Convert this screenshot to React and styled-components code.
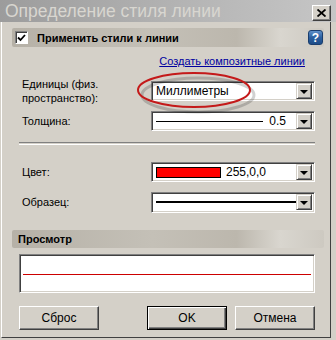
import React from 'react'
import styled, { createGlobalStyle } from 'styled-components'

const GlobalStyle = createGlobalStyle`
    html, body {
        margin: 0;
        padding: 0;
        background: #d4d0c8;
    }
    body {
        font-family: "Liberation Sans", Arial, sans-serif;
        font-size: 11px;
        color: #000;
    }
`

const Window = styled.div`
    position: relative;
    width: 336px;
    height: 340px;
    background: #d4d0c8;
    display: flex;
    flex-direction: column;
    overflow: hidden;
`

const TitleBar = styled.div`
    height: 22px;
    flex: none;
    display: flex;
    align-items: center;
    justify-content: space-between;
    padding: 0 5px 0 5px;
    background: linear-gradient(90deg, #9c9c9c 0%, #b4b4b4 55%, #c6c6c6 100%);
`

const Title = styled.span`
    font-size: 17.5px;
    color: #d8d6d0;
    margin-top: 1px;
`

const CloseButton = styled.div`
    width: 19px;
    height: 16px;
    box-sizing: border-box;
    margin-top: 4px;
    background: #d4d0c8;
    border-top: 1px solid #fff;
    border-left: 1px solid #fff;
    border-right: 1px solid #404040;
    border-bottom: 1px solid #404040;
    box-shadow: inset -1px -1px 0 #808080;
    display: flex;
    align-items: center;
    justify-content: center;
`

const Body = styled.div`
    flex: 1;
    margin: 0 5px 2px 1px;
    border-left: 1px solid #fff;
    border-right: 1px solid #404040;
    border-bottom: 1px solid #404040;
    padding: 6px 6px 0 10px;
    display: flex;
    flex-direction: column;
`

const GroupBar = styled.div`
    height: ${p => p.$h}px;
    display: flex;
    align-items: center;
    padding: 0 1px 0 ${p => p.$pl}px;
    margin-top: ${p => p.$mt || 0}px;
    border-radius: 2px;
    background: linear-gradient(90deg, #b6b1a7 0%, #c4c0b7 45%, #bcb7ad 72%, #d9d6cf 86%, #cdc9c1 100%);
    font-weight: bold;
    font-size: 11px;
`

const Checkbox = styled.div`
    width: 13px;
    height: 13px;
    box-sizing: border-box;
    background: #fff;
    border-top: 1px solid #808080;
    border-left: 1px solid #808080;
    border-right: 1px solid #fff;
    border-bottom: 1px solid #fff;
    box-shadow: inset 1px 1px 0 #404040;
    display: flex;
    align-items: center;
    justify-content: center;
    margin-right: 9px;
`

const HelpIcon = styled.div`
    margin-left: auto;
    width: 15px;
    height: 15px;
    border-radius: 3px;
    background: linear-gradient(180deg, #5e8fc8 0%, #2c60a0 50%, #1d4c88 100%);
    border: 1px solid #1a3e6e;
    box-sizing: border-box;
    color: #fff;
    font-weight: bold;
    font-size: 12px;
    display: flex;
    align-items: center;
    justify-content: center;
`

const LinkRow = styled.div`
    height: 14px;
    margin-top: 7px;
    display: flex;
    justify-content: flex-end;
    padding-right: 19px;
    line-height: 14px;
`

const Link = styled.span`
    color: #0000a0;
    text-decoration: underline;
`

const Section = styled.div`
    margin: 0 9px 0 7px;
    display: flex;
    flex-direction: column;
`

const Row = styled.div`
    height: 30px;
    display: flex;
    align-items: center;
    margin-top: ${p => p.$mt || 0}px;
`

const Label = styled.div`
    width: 132px;
    padding-left: 3px;
    box-sizing: border-box;
    line-height: 14px;
`

const Field = styled.div`
    width: 164px;
    height: ${p => p.$h || 20}px;
    box-sizing: border-box;
    background: #fff;
    border-top: 1px solid #808080;
    border-left: 1px solid #808080;
    border-right: 1px solid #fff;
    border-bottom: 1px solid #fff;
    box-shadow: inset 1px 1px 0 #404040, inset -1px -1px 0 #d4d0c8;
    display: flex;
    align-items: center;
    padding: 2px 2px 2px 4px;
`

const FieldContent = styled.div`
    flex: 1;
    display: flex;
    align-items: center;
    min-width: 0;
    padding-right: ${p => p.$pr || 0}px;
`

const Line = styled.div`
    flex: 1;
    height: ${p => p.$t}px;
    background: #000;
`

const Swatch = styled.div`
    width: 65px;
    height: 11px;
    box-sizing: border-box;
    background: #ff0000;
    border: 1px solid #000;
    margin-right: 5px;
`

const ValueText = styled.span`
    font-size: 12px;
    margin-left: ${p => p.$ml || 0}px;
`

const ArrowButton = styled.div`
    width: 16px;
    height: 16px;
    box-sizing: border-box;
    background: #d4d0c8;
    border-top: 1px solid #d4d0c8;
    border-left: 1px solid #d4d0c8;
    border-right: 1px solid #404040;
    border-bottom: 1px solid #404040;
    box-shadow: inset 1px 1px 0 #fff, inset -1px -1px 0 #808080;
    display: flex;
    align-items: center;
    justify-content: center;
    flex: none;
`

const Arrow = styled.div`
    width: 0;
    height: 0;
    border-left: 4px solid transparent;
    border-right: 4px solid transparent;
    border-top: 4px solid #000;
    margin-top: 1px;
`

const Separator = styled.div`
    height: 1px;
    margin: 6px 0 12px;
    border-top: 1px solid #808080;
    border-bottom: 1px solid #fff;
`

const Preview = styled.div`
    height: 39px;
    margin: 6px 9px 0 7px;
    box-sizing: border-box;
    background: #fff;
    border-top: 1px solid #808080;
    border-left: 1px solid #808080;
    border-right: 1px solid #fff;
    border-bottom: 1px solid #fff;
    box-shadow: inset 1px 1px 0 #404040, inset -1px -1px 0 #d4d0c8;
    display: flex;
    align-items: center;
    padding: 0 3px;
`

const PreviewLine = styled.div`
    flex: 1;
    height: 1px;
    background: #cc0000;
    margin-top: 1px;
`

const Buttons = styled.div`
    display: flex;
    gap: 8px;
    margin: 13px 9px 0 7px;
`

const Button = styled.div`
    width: 80px;
    height: 24px;
    box-sizing: border-box;
    background: #d4d0c8;
    display: flex;
    align-items: center;
    justify-content: center;
    font-size: 12px;
    margin-right: ${p => p.$mr || 0}px;
    border-top: 1px solid #fff;
    border-left: 1px solid #fff;
    border-right: 1px solid #404040;
    border-bottom: 1px solid #404040;
    box-shadow: inset -1px -1px 0 #808080;
    ${p => p.$default && `
        border: 1px solid #000;
        box-shadow: inset 1px 1px 0 #fff, inset -1px -1px 0 #404040, inset -2px -2px 0 #808080;
    `}
`

const Highlight = styled.svg`
    position: absolute;
    left: 134px;
    top: 70px;
    width: 122px;
    height: 44px;
    pointer-events: none;
`

export default function App() {
    return (
        <>
            <GlobalStyle />
            <Window>
                <TitleBar>
                    <Title>Определение стиля линии</Title>
                    <CloseButton>
                        <svg width="9" height="8" viewBox="0 0 9 8">
                            <path d="M0.5 0.5 L8.5 7.5 M8.5 0.5 L0.5 7.5" stroke="#000" strokeWidth="1.8" />
                        </svg>
                    </CloseButton>
                </TitleBar>
                <Body>
                    <GroupBar $h={19} $pl={3}>
                        <Checkbox>
                            <svg width="9" height="8" viewBox="0 0 9 8">
                                <path d="M1 3.5 L3.5 6 L8 1" stroke="#000" strokeWidth="1.8" fill="none" />
                            </svg>
                        </Checkbox>
                        Применить стили к линии
                        <HelpIcon>?</HelpIcon>
                    </GroupBar>
                    <LinkRow>
                        <Link>Создать композитные линии</Link>
                    </LinkRow>
                    <Section>
                        <Row $mt={8}>
                            <Label>Единицы (физ.<br />пространство):</Label>
                            <Field>
                                <FieldContent>
                                    <ValueText>Миллиметры</ValueText>
                                </FieldContent>
                                <ArrowButton><Arrow /></ArrowButton>
                            </Field>
                        </Row>
                        <Row>
                            <Label>Толщина:</Label>
                            <Field>
                                <FieldContent $pr={10}>
                                    <Line $t={1} />
                                    <ValueText $ml={6}>0.5</ValueText>
                                </FieldContent>
                                <ArrowButton><Arrow /></ArrowButton>
                            </Field>
                        </Row>
                        <Separator />
                        <Row>
                            <Label>Цвет:</Label>
                            <Field>
                                <FieldContent>
                                    <Swatch />
                                    <ValueText>255,0,0</ValueText>
                                </FieldContent>
                                <ArrowButton><Arrow /></ArrowButton>
                            </Field>
                        </Row>
                        <Row>
                            <Label>Образец:</Label>
                            <Field $h={21}>
                                <FieldContent>
                                    <Line $t={2} />
                                </FieldContent>
                                <ArrowButton><Arrow /></ArrowButton>
                            </Field>
                        </Row>
                    </Section>
                    <GroupBar $h={18} $pl={6} $mt={13}>Просмотр</GroupBar>
                    <Preview>
                        <PreviewLine />
                    </Preview>
                    <Buttons>
                        <Button $mr={40}>Сброс</Button>
                        <Button $default>OK</Button>
                        <Button>Отмена</Button>
                    </Buttons>
                </Body>
                <Highlight viewBox="0 0 122 44">
                    <ellipse cx="62" cy="22" rx="56" ry="17" fill="none" stroke="rgba(0,0,0,0.18)" strokeWidth="3" transform="translate(2 3)" />
                    <ellipse cx="60" cy="20" rx="56" ry="17" fill="none" stroke="#c41a1a" strokeWidth="2" />
                </Highlight>
            </Window>
        </>
    )
}
